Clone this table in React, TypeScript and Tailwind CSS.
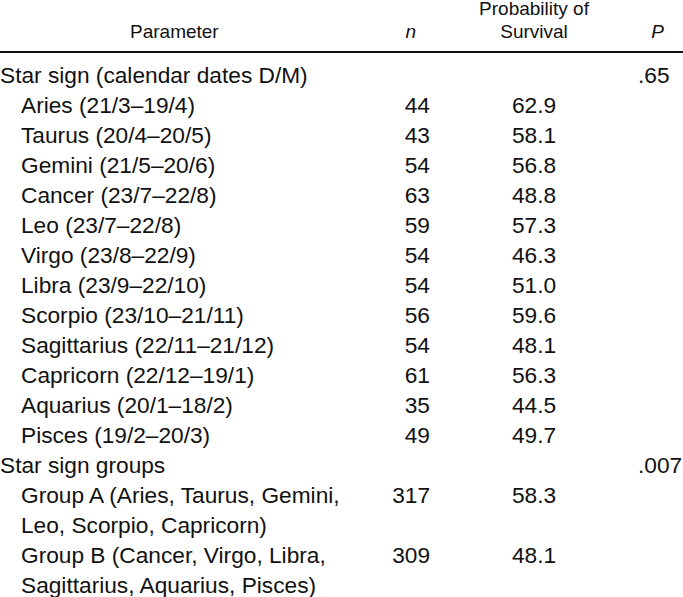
import React from "react";

type Row = { label: string[]; n?: string; p?: string; pv?: string; sub?: boolean };

const rows: Row[] = [
  { label: ["Star sign (calendar dates D/M)"], pv: ".65" },
  { label: ["Aries (21/3–19/4)"], n: "44", p: "62.9", sub: true },
  { label: ["Taurus (20/4–20/5)"], n: "43", p: "58.1", sub: true },
  { label: ["Gemini (21/5–20/6)"], n: "54", p: "56.8", sub: true },
  { label: ["Cancer (23/7–22/8)"], n: "63", p: "48.8", sub: true },
  { label: ["Leo (23/7–22/8)"], n: "59", p: "57.3", sub: true },
  { label: ["Virgo (23/8–22/9)"], n: "54", p: "46.3", sub: true },
  { label: ["Libra (23/9–22/10)"], n: "54", p: "51.0", sub: true },
  { label: ["Scorpio (23/10–21/11)"], n: "56", p: "59.6", sub: true },
  { label: ["Sagittarius (22/11–21/12)"], n: "54", p: "48.1", sub: true },
  { label: ["Capricorn (22/12–19/1)"], n: "61", p: "56.3", sub: true },
  { label: ["Aquarius (20/1–18/2)"], n: "35", p: "44.5", sub: true },
  { label: ["Pisces (19/2–20/3)"], n: "49", p: "49.7", sub: true },
  { label: ["Star sign groups"], pv: ".007" },
  { label: ["Group A (Aries, Taurus, Gemini,", "Leo, Scorpio, Capricorn)"], n: "317", p: "58.3", sub: true },
  { label: ["Group B (Cancer, Virgo, Libra,", "Sagittarius, Aquarius, Pisces)"], n: "309", p: "48.1", sub: true },
];

export default function App() {
  return (
    <div
      className="w-[683px] h-[597px] overflow-hidden bg-white text-[#111]"
      style={{ fontFamily: '"Liberation Sans", Arial, Helvetica, sans-serif' }}
    >
      <div className="mt-[-3px] grid grid-cols-[380px_50px_208px_45px] items-end border-b-2 border-[#111] pb-[8px] text-[19px] leading-[23px]">
        <div className="pl-[130px]">Parameter</div>
        <div className="text-right pr-[14px] italic">n</div>
        <div className="text-center">
          Probability of
          <br />
          Survival
        </div>
        <div className="text-right pr-[19px] italic">P</div>
      </div>
      <div className="pt-[7px] text-[22.7px] leading-[30px]">
        {rows.map((r, i) => (
          <div key={i} className="grid grid-cols-[380px_50px_208px_45px] items-start">
            <div className={r.sub ? "pl-[21px]" : "pl-[0px]"}>
              {r.label.map((l, j) => (
                <div key={j} className="whitespace-nowrap">
                  {l}
                </div>
              ))}
            </div>
            <div className="text-right">{r.n ?? ""}</div>
            <div className="text-center">{r.p ?? ""}</div>
            <div className="text-right pr-[15px]">{r.pv ?? ""}</div>
          </div>
        ))}
      </div>
    </div>
  );
}
